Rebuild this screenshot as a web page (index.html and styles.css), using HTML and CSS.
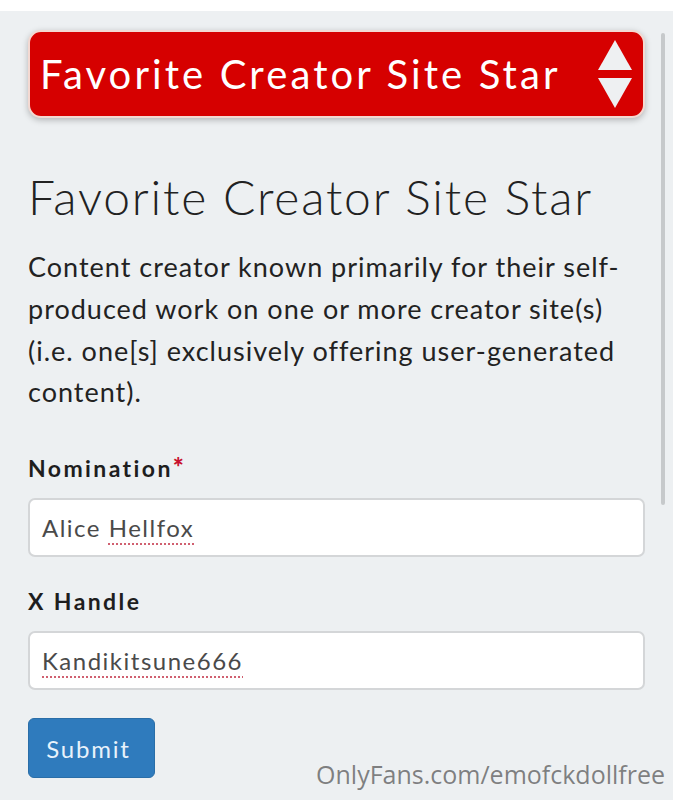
FILE: index.html
```html
<!DOCTYPE html>
<html lang="en">
<head>
  <meta charset="UTF-8">
  <title>Favorite Creator Site Star</title>
  <link rel="stylesheet" href="styles.css">
</head>
<body>
  <div class="topbar"></div>
  <div class="page">
    <div class="scrollbar"></div>
    <div class="picker">
      <span class="picker-text">Favorite Creator Site Star</span>
      <span class="arrows">
        <svg width="36" height="68" viewBox="0 0 36 68">
          <polygon points="18,0 35,30 1,30" fill="#eef0f2"/>
          <polygon points="1,38 35,38 18,68" fill="#eef0f2"/>
        </svg>
      </span>
    </div>

    <h1>Favorite Creator Site Star</h1>
    <p class="desc">Content creator known primarily for their self-produced work on one or more creator site(s) (i.e. one[s] exclusively offering user-generated content).</p>

    <label class="field-label">Nomination<span class="req">*</span></label>
    <div class="field"><span class="spell">Alice <u>Hellfox</u></span></div>

    <label class="field-label">X Handle</label>
    <div class="field"><span class="spell"><u>Kandikitsune666</u></span></div>

    <div class="bottom">
      <button class="submit">Submit</button>
      <span class="watermark">OnlyFans.com/emofckdollfree</span>
    </div>
  </div>
</body>
</html>
```

FILE: styles.css
```css
body { margin: 0; background: #edf0f2; font-family: Lato, "Open Sans", sans-serif; color: #222; }
.topbar { height: 11px; background: #fff; }
.page { position: relative; padding: 19px 28px 0 28px; height: 789px; box-sizing: border-box; overflow: hidden; }
.scrollbar { position: absolute; left: 661px; top: 22px; width: 4px; height: 472px; background: #c6c9cb; border-radius: 2px; }

.picker { width: 617px; height: 88px; box-sizing: border-box; background: #d60000; border: 2px solid #f3d9d2; border-radius: 13px; box-shadow: 0 2px 6px rgba(0,0,0,0.25); display: flex; align-items: center; justify-content: space-between; padding: 0 10px 0 10px; }
.picker-text { color: #fff; font-size: 40px; letter-spacing: 3.1px; }
.arrows { display: flex; align-items: center; }
.arrows svg { display: block; }

h1 { font-weight: 300; font-size: 48px; margin: 51px 0 0 0; line-height: 56px; letter-spacing: 1.8px; color: #222; }
.desc { font-size: 27px; font-weight: 400; line-height: 41.8px; margin: 21px 0 0 0; width: 620px; letter-spacing: 1px; color: #222; }

.field-label { display: block; font-size: 23px; font-weight: 700; letter-spacing: 2.4px; margin: 40px 0 0 0; line-height: 28px; color: #1e1e1e; }
.req { color: #c8102e; letter-spacing: 0; font-size: 26px; font-weight: 900; }
.field { width: 617px; height: 59px; box-sizing: border-box; background: #fff; border: 2px solid #d4d6d8; border-radius: 7px; margin-top: 16px; padding: 0 12px; display: flex; align-items: center; font-size: 24px; letter-spacing: 1.5px; color: #4a4a4a; }
.field + .field-label { margin-top: 30px; }
.spell u { text-decoration: underline dotted #d06070; text-underline-offset: 6px; text-decoration-thickness: 2px; }

.bottom { display: flex; justify-content: space-between; align-items: flex-start; margin-top: 28px; }
.submit { width: 127px; height: 60px; background: #2f7bbd; color: #e8f2fb; border: 1px solid #2a6ea8; border-radius: 6px; font-family: Lato, "Open Sans", sans-serif; font-size: 24px; letter-spacing: 1.8px; padding: 0 6px 0 0; }
.watermark { font-family: "Open Sans", sans-serif; font-size: 25px; color: rgba(90,90,90,0.75); margin-top: 39px; margin-right: -20px; }
```
